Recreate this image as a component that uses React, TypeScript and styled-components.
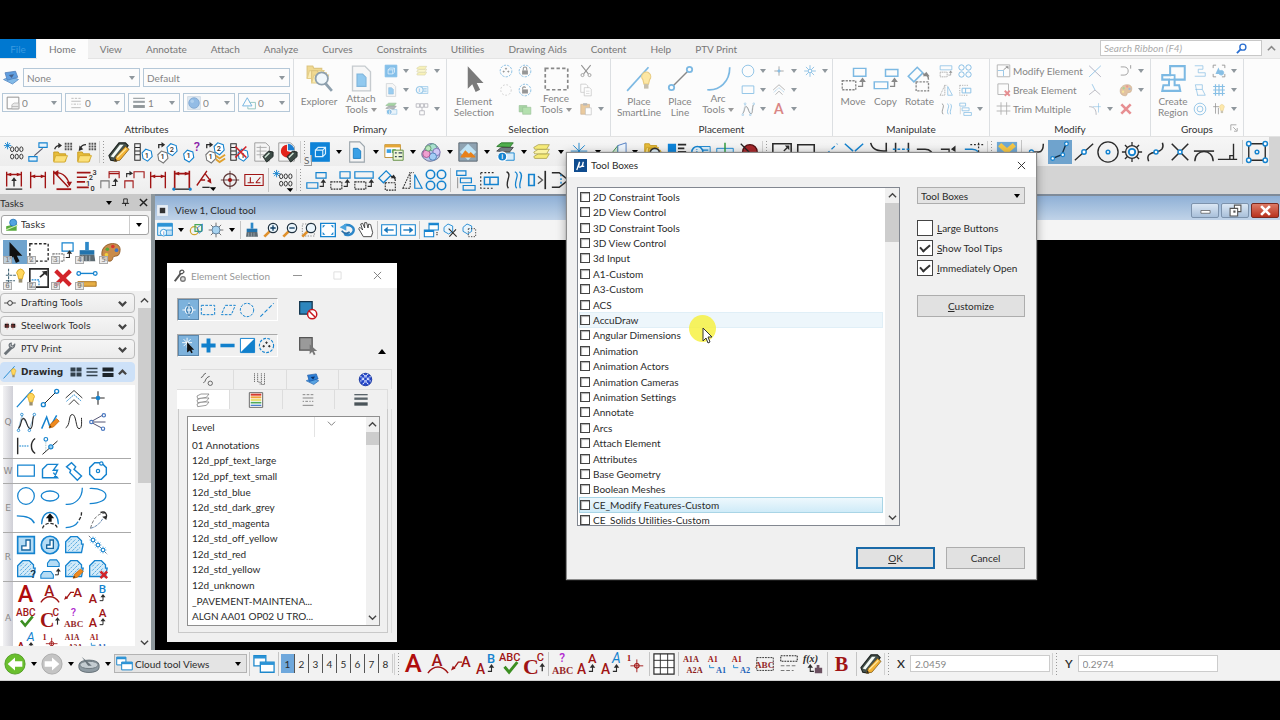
import React, { ReactNode } from "react";
import styled, { createGlobalStyle, css } from "styled-components";

const UI = 'Lato, "Open Sans", sans-serif';
const TASK = '"DejaVu Sans", Verdana, sans-serif';

const BLUE = "#1583cf";
const RED = "#a01414";
const INK = "#2b2b2b";
const GREY = "#8a8a8a";

const Global = createGlobalStyle`
  * { box-sizing: border-box; }
  body { margin: 0; background: #000; font: 10px/12px ${UI}; color: #2b2b2b; }
  body, button, input, select { font-variant-ligatures: none; }
  button, input, select { font: inherit; color: inherit; margin: 0; }
  button { padding: 0; border: 0; background: none; }
  ul { list-style: none; margin: 0; padding: 0; }
`;

/* ---------- drawing helpers ---------- */

const l = (d: string, c = BLUE, w = 1.4, dash?: string) => (
  <path d={d} fill="none" stroke={c} strokeWidth={w} strokeDasharray={dash} />
);
const f = (d: string, c: string, s = "none", w = 1) => (
  <path d={d} fill={c} stroke={s} strokeWidth={w} />
);
const o = (x: number, y: number, r: number, c = BLUE, fill = "none", w = 1.4, dash?: string) => (
  <circle cx={x} cy={y} r={r} fill={fill} stroke={c} strokeWidth={w} strokeDasharray={dash} />
);
const t = (x: number, y: number, size: number, s: string, c = RED, serif = false) => (
  <text
    x={x}
    y={y}
    fontSize={size}
    fill={c}
    fontWeight={serif ? 700 : 500}
    fontFamily={serif ? '"Liberation Serif", serif' : "Roboto, sans-serif"}
  >
    {s}
  </text>
);
const head = (x: number, y: number, c = INK) => f(`M${x} ${y - 3}l3 4h-6z`, c);
const hook = (x: number, y: number, c = INK) => (
  <>
    {l(`M${x} ${y}h4v-5`, c, 1.2)}
    {head(x + 4, y - 5, c)}
  </>
);
const dots = (x: number, y: number) => (
  <>
    {[0, 5, 10].map((d) => (
      <g key={d}>
        <ellipse cx={x + d} cy={y} rx="1.8" ry="2.6" fill="none" stroke={INK} strokeWidth="1" />
        <ellipse cx={x + d} cy={y + 8} rx="1.8" ry="2.6" fill="none" stroke={INK} strokeWidth="1" />
      </g>
    ))}
  </>
);
const miniDots = (x: number, y: number) => l(`M${x} ${y}h8M${x} ${y + 3}h8M${x} ${y + 6}h8`, "#555", 2, "2 1");
const tag = (x: number, y: number, s: string, c = BLUE) => (
  <>
    {f(`M${x} ${y}l4-4l6 2l1 6l-5 5l-5-3z`, "#fff", c, 1.2)}
    {t(x + 3, y + 5, 8, s, INK)}
  </>
);
const folder = (x: number, y: number) => (
  <>
    {f(`M${x} ${y}h5l1 2h7v8h-13z`, "#e7bd3b", "#c79a1c")}
    {f(`M${x + 2} ${y + 4}h13l-3 7h-12z`, "#fbe07a", "#d2a92c")}
  </>
);
const redX = (x: number, y: number, k = 6, w = 3) => l(`M${x - k} ${y - k}l${2 * k} ${2 * k}M${x + k} ${y - k}l${-2 * k} ${2 * k}`, "#d3242a", w);
const pen = (x: number, y: number) => (
  <>
    {f(`M${x} ${y + 10}l2-5l7-6l3 3l-7 7z`, "#f08a1d", "#c96a0c")}
    {f(`M${x} ${y + 10}l1-3l2 2z`, "#5b3a12")}
  </>
);
const tagPen = (
  <>
    {f("M1 16L12 2l7 0 3 3-5 8-8 9-6-1z", "#46524c", "#1c2220", 1.2)}
    {f("M3 17L13 4l4 0-11 14z", "#f4faf6")}
    {f("M7 22l2-5L19 6l4 3-10 12z", "#f3b234", "#7a5512", 0.8)}
    {l("M10 18L20 8", "#ffe9a3", 1.4)}
    {f("M7 22l1-3 2 2z", "#222")}
  </>
);
const miniTag = (
  <>
    {f("M12 17l6-6 5 1v5l-7 6z", "#3b4a45", "#1d2422")}
    {l("M14 18l5-5", "#cfe3d6", 1.6)}
  </>
);
const palette = (
  <>
    {f("M2 14C2 6 9 2 16 3c6 1 7 6 5 11-1 3-4 2-6 3s0 4-4 5C6 22 2 19 2 14z", "#c98b4a", "#8f5b26")}
    {o(8, 9, 2, "none", "#58a63a")}
    {o(14, 6, 2, "none", "#d9362b")}
    {o(7, 15, 2, "none", "#f1cf3b")}
    {o(18, 10, 2, "none", "#3d74c8")}
  </>
);
const bulb = (x: number, y: number) => (
  <>
    {f(`M${x} ${y}a4 4 0 1 1 6 0l-1 4h-4z`, "#ffd65c", "#d8a520")}
    {f(`M${x + 1} ${y + 4}h4v4h-4z`, "#9a8f6f")}
  </>
);
const hatch = (d: string) => (
  <>
    {f(d, "#d4ebf9", BLUE, 1.6)}
    {l("M5 9l4-4M5 14l9-9M5 19l13-13M10 19l8-8M15 19l4-4", "#4ba3dc", 1.1, "3 1")}
  </>
);
const block = "M2 21V8l6-6h8l5 5v4h2l-2 10z";
const layers = (a: string, b: string) => (
  <>
    {[14, 9, 4].map((y, i) => (
      <g key={y}>{f(`M3 ${y + 3}l5-3h12l-3 5h-13z`, i === 1 ? b : a, "#a39a45", 0.8)}</g>
    ))}
  </>
);
const sun = (x: number, y: number, r: number, c = BLUE, w = 1) =>
  l(`M${x} ${y - r}v${2 * r}M${x - r} ${y}h${2 * r}M${x - r * 0.7} ${y - r * 0.7}l${r * 1.4} ${r * 1.4}M${x + r * 0.7} ${y - r * 0.7}l${-r * 1.4} ${r * 1.4}`, c, w);
const magnifier = (sign: string) => (
  <>
    {l("M2 22l8-8", "#e0912c", 4)}
    {o(15, 9, 7, "#20313f", "#eaf5fc", 1.8)}
    {l(sign, "#0f3c63", 2)}
  </>
);
const lock = (open: boolean) => (
  <>
    {o(12, 12, 10, BLUE, "none", 1.6, "4 2")}
    {f("M7 11h10v7h-10z", "#333")}
    {l(open ? "M8 11V8a3 3 0 0 1 5 0" : "M9 11V8a3 3 0 0 1 6 0v3", "#333", 1.8)}
  </>
);
const red = (d: string, w = 1.5) => l(d, RED, w);
const brush = (
  <>
    {f("M10 1h4v9h-4z", "#2d88c8")}
    {f("M4 10h16v5h-16z", "#2273ad")}
    {f("M4 15h16l1 7h-18z", "#5d6a72")}
    {l("M7 16v6M11 16v6M15 16v6", "#aab6bd", 1)}
  </>
);
const windowPair = (
  <>
    {f("M1 3h13v11h-13z", "#fff", "#1d88cc", 1.4)}
    {f("M1 3h13v3h-13z", "#2b93d6")}
    {f("M8 10h15v11h-15z", "#fff", "#1d88cc", 1.4)}
    {f("M8 10h15v3h-15z", "#2b93d6")}
  </>
);
const lineStyles = l("M4 4h4m2 0h4m2 0h4M4 9h16M4 14h2m2 0h4m2 0h2m2 0h2M4 20h16", "#777", 1.3);
const weights = (
  <>
    {l("M2 4h20", "#5a646a", 2)}
    {l("M2 10h20", "#5a646a", 3.5)}
    {l("M2 18h20", "#4a5459", 5)}
  </>
);

const icons: Record<string, ReactNode> = {
  keyin: <>{sun(5, 5, 4)}{dots(10, 9)}</>,
  chain: <>{f("M13 2h9v5h-9zM2 17h9v5h-9z", "#e8f3fb", BLUE, 1.2)}{l("M8 16l9-8", "#556", 1.2)}</>,
  openDots: <>{folder(3, 12)}{miniDots(15, 3)}{l("M4 9c1-3 2-4 5-4", INK, 1.4)}{f("M12 5l-4-3v6z", INK)}</>,
  saveDots: <>{folder(3, 12)}{miniDots(15, 3)}{l("M6 8c1-3 3-4 6-4", INK, 1.4)}{f("M4 11l1-6 4 4z", INK)}</>,
  tagPen,
  tagCol: <>{l("M3 3h6v18h-6zM3 7h6M3 11h6M3 15h6", INK, 1.1)}{tag(11, 13, "1")}</>,
  tagCopy: <>{tag(2, 15, "1", "#777")}{tag(12, 7, "2")}{l("M3 8V4h4", INK)}{f("M10 4l-4-3v6z", INK)}</>,
  tagHelp: <>{tag(4, 14, "1")}{t(15, 11, 14, "?", "#8b1fa9")}</>,
  tagDown: <>{tag(2, 15, "1", "#777")}{tag(11, 6, "2")}{l("M13 16l4 3 6-4M13 20l4 3 6-4", "#e0a02b", 2)}{l("M3 8V4h4", INK)}{f("M10 4l-4-3v6z", INK)}</>,
  tagDel: <>{l("M3 3h6v18h-6zM3 7h6M3 11h6M3 15h6", INK, 1.1)}{tag(11, 13, "1")}{redX(14, 12, 6, 1.8)}</>,
  pageTag: <>{f("M3 2h12l4 4v16h-16z", "#f5f5f5", "#999")}{l("M5 7h11M5 11h11M5 15h8M9 5v14", "#aaa", 1)}{miniTag}</>,
  pieTag: <>{f("M3 2h13l4 4v16h-17z", "#f5f5f5", "#999")}{f("M12 11V4a7 7 0 1 0 7 9z", "#e2231a")}{f("M13 10V3a7 7 0 0 1 7 7z", "#1d7fd1")}{miniTag}</>,
  cube: <>{f("M2 2h20v20h-20z", "#0e83d8", "#0e83d8", 1.5)}{l("M7 10h8v7h-8zM7 10l3-3h8v7l-3 3M15 10l3-3", "#d8efff", 1.3)}</>,
  page: <>{f("M4 1h11l5 5v17h-16z", "#f4f4f4", "#9aa4ab", 1.2)}{f("M8 8h5l3 3v8h-8z", "#3aa0e6", "#1d7ec2")}</>,
  browser: <>{f("M2 4h17v14h-17z", "#fff", "#b98b2f")}{f("M2 4h17v3h-17z", "#e5a637")}{f("M4 9h5v4h-5z", "#3aa0e6")}{f("M10 9h4v4h-4z", "#47ad52")}{f("M11 10h11v11h-11z", "#eef6d8", "#5b8a3b")}{l("M13 13h2m2 0h4M13 17h2m2 0h4", "#345", 1.3)}</>,
  cluster: <>{f("M2 14c0-3 3-4 4-7s5-5 8-4 6 3 7 7 1 8-3 10-8 3-11 1-5-3-5-7z", "#b9c6e8", "#5a648a")}{o(14, 7, 4, "#5f9a8c", "#a9e0cf", 1)}{o(18, 12, 4, "#7c6fb0", "#cfc8f5", 1)}{o(14, 17, 4, "#4d7fb8", "#a3cdf5", 1)}{o(7, 14, 4, "#a8508e", "#ef9fd0", 1)}{o(9, 8, 3, "#5f9a6c", "#bce8bd", 1)}</>,
  picture: <>{f("M2 2h20v20h-20z", "#8fa3b2", "#59656e")}{f("M12 3l9 9-9 9-9-9z", "#bfe3f5")}{f("M4 17l5-7 4 4 2-2 5 5v1h-16z", "#e8811a")}</>,
  levelInfo: <>{f("M3 6l5-4h13l-4 5z", "#4fae4c", "#2b7a2c")}{f("M3 11l5-4h13l-4 5z", "#6f7a80", "#444")}{f("M3 16l5-4h10l-4 5z", "#e0862a")}{f("M10 13h12v8h-12z", "#d6ecfa", BLUE)}{o(9, 17, 5, "#fff", "#1583cf")}{t(8, 20, 8, "i", "#fff")}</>,
  levels: layers("#f5ea78", "#fbf3a6"),
  star: sun(12, 11, 9),
  mirrorGreen: <>{f("M2 20L14 5v12z", "#cfe9d0", "#3c8a4b")}{f("M14 5l9-3v14l-9 1z", "#eef6fd", "#4a78c0")}</>,
  folderFind: <>{folder(3, 3)}{folder(7, 8)}{o(14, 13, 5, "#333", "#dff0fa", 1.8)}</>,
  blueList: <>{f("M2 3h9v12h-9z", "#0e83d8")}{l("M13 4h9M13 8h7M13 12h9M3 19h18", INK, 2)}</>,
  info: <>{f("M10 6h12v12h-12z", "#d9eefb", BLUE)}{l("M14 10h6M14 14h6", BLUE)}{o(8, 12, 6, BLUE, "#e6f4fc", 1.6)}{t(6, 16, 10, "i", BLUE)}</>,
  plusBox: <>{f("M3 8h18v12h-18z", "#d9eefb", BLUE)}{l("M12 2v16", "#2e9a3c", 1.6)}</>,
  ball: <>{o(13, 12, 8, "#541012", "#a8282c")}{l("M3 3l18 18", "#222", 1.4)}</>,
  resize: <>{l("M2 3h20v18h-20z", INK, 1.7)}{l("M14 11l5-5", INK, 1.5)}{f("M20 5v5l-5-5z", INK)}</>,
  rect: l("M3 4h18v16h-18z", INK, 1.7),
  dashDiag: l("M2 20L20 3", BLUE, 1.4, "5 3"),
  cross: <>{l("M2 3l9 8M13 11l9-8", BLUE, 1.6)}{l("M4 20l7-8M20 20l-7-8", BLUE, 1.2, "3 2")}</>,
  curveIn: l("M4 2c2 8 8 9 18 9M21 2v9", INK, 1.7),
  trimPair: <>{l("M5 2v20M19 2v20", INK, 1.7)}{l("M2 9h20", BLUE, 1.5, "3 2")}</>,
  bend: l("M2 9h9c6 0 9 5 10 10", INK, 1.7),
  stepArrow: <>{l("M2 9h9v9", INK, 1.5)}{f("M13 9l5-4v7z", INK)}</>,
  tangDash: <>{l("M2 9h8c6 0 8 4 11 10", BLUE, 1.6)}{l("M8 4h14M17 2v10", INK, 1.3, "2 2")}</>,
  yellowX: <>{f("M1 1h22v22h-22z", "#6fa8d4")}{l("M4 4l8 7 8-7M12 11v9", "#f5c746", 5)}</>,
  snapElbow: <>{l("M9 12h6c4 0 5-3 5-9", INK, 1.6)}{o(7, 12, 2.2, BLUE, "#fff")}</>,
  snapNear: <>{l("M4 19l10-4 5-13", "#14324a", 1.5)}{o(4, 19, 2, BLUE, "#fff")}{o(15, 15, 2, BLUE, "#fff")}{o(19, 3, 2, BLUE, "#fff")}</>,
  snapMid: <>{l("M2 21L22 3", INK, 1.5)}{o(12, 12, 2.4, BLUE, "#fff", 1.6)}</>,
  snapCenter: <>{o(12, 12, 11, INK, "none", 1.5)}{o(12, 12, 2, BLUE, "#fff", 1.6)}</>,
  snapOrigin: <>{sun(12, 12, 11, INK, 1.4)}{o(12, 12, 7, INK, "#f2f2f2", 1.4)}{o(12, 12, 3.5, BLUE, "#fff", 2)}</>,
  snapBisect: <>{l("M4 22c-3-7 2-9 8-10s9-4 7-10", INK, 1.6)}{o(12, 12, 2.2, BLUE, "#fff", 1.6)}</>,
  snapInter: <>{l("M3 3l18 18M21 3L3 21", INK, 1.7)}{o(12, 12, 2.2, BLUE, "#fff", 1.6)}</>,
  snapTang: <>{l("M1 11h22", INK, 1.7)}{l("M2 22c0-14 20-14 20 0", INK, 1.5)}</>,
  snapPerp: <>{l("M1 20h21M18 3v17M14 20v-4h4", INK, 1.5)}</>,
  snapMulti: <>{l("M3 3h18v18h-18z", INK, 1.5)}{[3, 21].map((x) => [3, 21].map((y) => <g key={`${x}-${y}`}>{o(x, y, 2.4, BLUE, "#fff", 1.6)}</g>))}{o(12, 12, 2, BLUE, "#fff", 1.6)}</>,

  dimUp: <>{red("M4 3v16M20 3v16M4 6h16")}{f("M4 6l5-2v4zM20 6l-5-2v4z", RED)}{l("M3 22h18M12 19v-7", INK, 1.5)}{head(12, 12)}</>,
  dimH: <>{red("M4 3v18M20 3v18M4 8h16")}{f("M4 8l5-2v4zM20 8l-5-2v4z", RED)}</>,
  dimAngle: <>{red("M3 2v15M3 3l16 17M4 4c9-1 15 6 16 14")}{l("M6 22h16", RED, 2)}{f("M3 4l5-3v6zM20 19l-3-5h6z", RED)}</>,
  dimOrd: <>{red("M2 4h15M2 9h11M2 14h9M2 20h13", 1.8)}{t(19, 7, 8, "3", INK)}{t(15, 12, 8, "2", INK)}{t(12, 18, 8, "1", INK)}{t(17, 24, 8, "0", INK)}</>,
  dimCopy: <>{red("M11 10V3h11v7M11 5h11", 1.2)}{l("M2 21v-8h9v8", "#777", 1.2)}{hook(14, 18)}</>,
  dimCopy2: <>{red("M12 10V3h11v7M2 21v-8h9v8", 1.2)}{l("M4 9V5h4", INK, 1.2)}{f("M11 5l-4-3v5z", INK)}</>,
  dimBox: <>{red("M4 2v19M20 2v19M4 5h16", 1.8)}{f("M4 5l5-2v4zM20 5l-5-2v4z", RED)}{l("M3 22h18", INK, 1.5)}{o(3, 22, 1, BLUE, BLUE)}{o(21, 22, 1, BLUE, BLUE)}</>,
  dimSlope: <>{red("M2 18L13 2M6 12h5M11 5l6 8")}{f("M18 16l-5-3 4-3z", RED)}{l("M8 20h8", INK)}{f("M16 20h7l-3 4z", "#000")}</>,
  target: <>{o(12, 12, 7, "#5b3434", "none", 1.4)}{l("M12 2v20M2 12h20", "#5b3434", 1)}{o(12, 12, 1.5, RED, RED)}</>,
  perpBox: <>{red("M2 6h20v12h-20zM5 15h7M8 9v6M14 15l5-6M14 15h5", 1.2)}</>,
  keyinMenu: <>{sun(5, 5, 4)}{dots(10, 8)}{f("M16 21h7l-3 4z", "#000")}</>,
  copyUp: <>{l("M12 4h11v6h-11zM2 15h12v6h-12z", BLUE, 1.3)}{hook(16, 19)}</>,
  moveUp: <>{l("M12 3h11v7h-11z", BLUE, 1.3)}{l("M2 14h12v8h-12z", INK, 1.2, "2 1")}{hook(16, 19)}</>,
  scaleUp: <>{l("M2 3h20v7h-20z", BLUE, 1.3)}{l("M2 14h12v8h-12z", INK, 1.2, "2 1")}{hook(16, 19)}</>,
  rotate: <>{l("M2 10l8-8 5 5-8 8z", BLUE, 1.4)}{l("M9 15h11v8h-11z", INK, 1.2, "2 1")}{l("M20 13c0-4-2-5-5-5", INK, 1.3)}{head(18, 9)}</>,
  mirror: <>{l("M2 21L10 4v17z", INK, 1.1, "2 1")}{l("M15 6l8 15h-8z", BLUE, 1.3)}{l("M9 4h6", INK, 1, "1 1")}</>,
  array: <>{[6, 18].map((x) => [6, 18].map((y) => <g key={`${x}-${y}`}>{o(x, y, 4.6, BLUE, "none", 1.7)}</g>))}</>,
  align: <>{l("M3 2h10v5h-10zM7 10h12v5h-12zM10 18h13v5h-13z", BLUE, 1.3)}{l("M4 9v12", "#888", 1)}</>,
  stretch: <>{l("M7 9h15v8h-15zM13 9v8", BLUE, 1.6)}{l("M3 4h14M3 4v17h14", INK, 1.2, "2 2")}</>,
  moveParallel: <>{l("M5 3c7 3-3 12 2 18", INK, 1.5)}{l("M14 3c7 3-3 12 2 18M19 3c6 4-2 12 1 18", BLUE, 1.4)}</>,
  alignEdge: <>{l("M3 6h6v12h-6z", BLUE, 1.8)}{l("M13 8l5 4-5 4", "#555", 1.4)}{l("M21 2v20", INK, 1.8)}</>,
  roundEdge: <>{l("M2 4h8l10 8-10 8h-8", INK, 1.7)}{l("M12 6v12", BLUE, 1.5, "2 2")}</>,

  explorer: <>{folder(1, 1)}{folder(5, 5)}{o(14, 12, 5.5, "#35566f", "#e8f4fb", 1.6)}{l("M17 16l6 7", "#35566f", 2.4)}</>,
  cursor: f("M6 1v20l4-4 3 7 4-2-3-6h6z", "#111"),
  fence: l("M2 3h20v19h-20z", INK, 1.5, "3 2"),
  dashDots: <>{o(12, 12, 10, BLUE, "none", 1.6, "4 2")}{o(8, 13, 1, INK, INK)}{o(16, 13, 1, INK, INK)}{o(12, 8, 1, INK, INK)}</>,
  dashCircle: o(12, 12, 9, "#888", "none", 1.2, "3 3"),
  lockClosed: lock(false),
  lockOpen: lock(true),
  greenFolders: <>{f("M2 6h13v11h-13z", "#55b04e", "#2f7d2c")}{f("M8 9h14v12h-14z", "#6fc564", "#2f7d2c")}</>,
  cut: <>{l("M4 2l12 15M20 2L8 17", INK, 1.8)}{o(6, 19, 2.6, INK)}{o(18, 19, 2.6, INK)}</>,
  copy: <>{f("M3 2h9l3 3v11h-12z", "#fff", "#777")}{f("M9 8h9l3 3v11h-12z", "#fff", "#777")}{l("M12 14h6M12 18h6", "#999", 1)}</>,
  paste: <>{f("M3 4h15v17h-15z", "#d99a43", "#8f5b20")}{f("M7 2h7v4h-7z", "#777")}{f("M11 10h10v12h-10z", "#fff", "#777")}</>,
  grid4: <>{l("M2 3h6v6h-6zM9 3h6v6h-6zM16 3h6v6h-6zM8 15h8v7h-8zM12 9v6", "#556", 1.2)}</>,
  smartline: <>{l("M1 23L20 2", BLUE, 1.5)}{bulb(15, 13)}</>,
  line: <>{l("M4 20L20 4", INK, 1.2)}{o(4, 20, 2.4, BLUE, "#fff", 1.6)}{o(20, 4, 2.4, BLUE, "#fff", 1.6)}</>,
  arc: l("M2 22C13 23 22 15 22 2", BLUE, 1.5),
  circle: o(12, 12, 10, BLUE, "none", 1.5),
  box: l("M2 5h20v13h-20z", BLUE, 1.5),
  point: <>{l("M12 4v16M4 12h16", INK, 1.3)}{o(12, 12, 2, BLUE, BLUE)}</>,
  burst: <>{sun(12, 12, 10, BLUE, 1.5)}{o(12, 12, 3, BLUE, "#fff")}</>,
  spline: <>{l("M3 20L7 4l9 16 6-16", "#8fb8d4", 1)}{l("M3 20C8 13 5 8 9 8s4 12 8 12 2-10 4-15", INK, 1.4)}{o(7, 3, 1.5, BLUE, "#fff", 1)}{o(22, 3, 1.5, BLUE, "#fff", 1)}{o(3, 22, 1.5, BLUE, "#fff", 1)}{o(16, 22, 1.5, BLUE, "#fff", 1)}</>,
  peaks: <>{l("M2 12l10-9 10 9M6 20l6-6 6 6", INK, 1.1)}{l("M3 16l9-8 9 8", BLUE, 1.1, "2 1")}</>,
  letterA: t(3, 21, 26, "A", "#b91111"),
  createRegion: <>{l("M9 1h13v12h-9v5h4l1 5H2l1-5h5v-5H2V9h7z", BLUE, 1.8)}{l("M9 9h4v4M8 13h5", BLUE, 1.6)}</>,
  regionA: l("M3 3h14v6h-8v6h12v6h-18", BLUE, 1.2),
  regionB: l("M4 3h12v8l5 10h-14M4 3l4 18M4 11h12", BLUE, 1.2),
  ring: <>{o(12, 12, 10)}{o(12, 12, 5)}</>,
  select3: <>{l("M2 7V2h5M17 2h5v5M22 17v5h-5M7 22H2v-5", INK, 1.5)}{f("M6 17l5-11 5 11z", "#1583cf")}{o(16, 15, 4, BLUE, "#1583cf")}</>,
  hash: l("M6 2v20M12 2v20M18 2v20M2 6h20M2 12h20M2 18h20", BLUE, 2),
  hashBulb: <>{l("M6 2v18M2 8h10M11 10v11", INK, 1.3)}{bulb(14, 11)}</>,
  modify: <>{l("M2 3h20v19h-20z", "#666", 1.4)}{l("M3 12h9v9", BLUE, 1.3)}{l("M12 11l6-5", INK, 1.5)}{f("M20 5v5l-5-5z", INK)}</>,
  breakEl: <>{l("M3 3h17v17h-17z", "#666", 1.4)}{redX(18, 18, 4, 3)}</>,
  trim: l("M8 2v20M17 2v20M1 8h22M1 16h22", "#666", 1.4),
  xLines: <>{l("M2 3l20 19", "#557", 1.4)}{l("M22 3L2 22", BLUE, 1.4)}</>,
  branch: <>{l("M2 20l10-8 9 8", "#667", 1.4)}{l("M7 2l5 10", BLUE, 1.3)}</>,
  tee: <>{l("M2 8c8 0 12 4 12 14", "#667", 1.4)}{l("M18 2v16M8 8h14", BLUE, 1)}</>,
  dee: <>{l("M3 5h6c9 0 9 14 0 14h-6", INK, 1.4)}{l("M20 2v6", INK, 1.5)}</>,
  palette,
  redX: redX(12, 12, 8, 4.5),
  levelBlue: <>{f("M2 14l10-4 10 4-8 6z", "#5aa4e2", "#1b5fae")}{f("M4 5l14-2 3 8-14 4z", "#2d7fd6", "#1653a0")}{f("M9 8l7-1-3 5z", "#0b2f66")}</>,
  swatch: <>{f("M2 2h20v20h-20z", "#fff", "#444", 1.6)}{f("M10 15l4-3h8v10h-12z", "#ddd", "#666")}{l("M10 18h11", "#666", 1)}</>,
  globe: <>{f("M1 1h22v22h-22z", "#cfe0ee", "#9db4c6")}{o(12, 12, 9, "#2a6ab0", "#4e93d6")}{o(9, 9, 3, "none", "#7fb4e6")}</>,
  triSquare: <>{l("M1 17L9 3l8 14z", BLUE, 1.6)}{l("M13 11h10v11h-13v-4", "#4fa39a", 1.6)}</>,
  lineStyles,
  weights,

  elMove: <>{l("M11 2h12v9h-12z", BLUE, 1.3)}{l("M1 14h12v8h-12z", "#777", 1.2, "2 1")}{hook(15, 18)}</>,
  brush,
  accuBulb: <>{l("M5 2v20M2 9h12M2 15h10", "#467", 1.2, "3 1")}{bulb(15, 9)}</>,
  modBox: <>{l("M2 2h20v20h-20z", INK, 1.8)}{l("M13 11l6-5", INK, 1.8)}{f("M21 4v6l-6-5z", INK)}{l("M4 14h8v7", BLUE, 1.2, "2 1")}</>,
  measure: <>{l("M4 7h16", BLUE, 1.5)}{o(3, 7, 2, BLUE, "#fff")}{o(21, 7, 2, BLUE, "#fff")}{f("M2 16h20v5h-20z", "#e6ae45", "#a9701a")}</>,
  tasks: <>{f("M2 14l18-4v12h-18z", "#58ab3d")}{o(14, 8, 6, "#1f6fb5", "#52a4e0")}{l("M2 20L22 12", "#d3f0b5", 2)}</>,
  plane: <>{l("M2 12h20", INK, 1.4)}{o(12, 12, 4, INK, "#f3f3f3", 1.6)}</>,
  steel: <>{f("M3 8h7v7h-7zM14 8h7v7h-7z", "#111")}{l("M1 12h22M7 6v12M17 6v12", "#e0524e", 0.8)}</>,
  wrench: <>{l("M3 21L15 9", "#6b7278", 5)}{l("M21 3l-4 4-3-1 0-4c-3 0-5 4-2 7s8 1 8-4", "#6b7278", 2.2)}</>,
  gridView: f("M1 3h10v8h-10zM13 3h10v8h-10zM1 13h10v8h-10zM13 13h10v8h-10z", "#33414c"),
  listView: l("M1 5h22M1 12h22M1 19h22", "#33414c", 2.6),
  panelView: f("M1 3h22v8h-22zM1 14h22v8h-22z", "#1d252b"),

  sketch: <>{l("M2 20L8 6l4 12 8-14", BLUE, 1.8)}{pen(11, 9)}</>,
  wave: l("M2 19C8 16 5 3 10 3s4 17 8 17 3-8 3-13", INK, 1.2),
  rays: <>{l("M3 12L19 3M3 12h18M3 12l15 8", "#446", 1.1)}{o(4, 12, 2, "#4a78c0", "#fff")}{o(19, 4, 2, "#4a78c0", "#fff")}{o(18, 20, 2, "#4a78c0", "#fff")}</>,
  construct: <>{l("M2 2v20M23 3c-6 4-6 14 0 18", INK, 1.7)}{l("M4 12h12", BLUE, 1.4, "2 1")}</>,
  perpLine: <>{l("M3 22L21 6", INK, 1.2)}{o(7, 4, 2.2, BLUE, "#fff")}{o(13, 13, 2.5, BLUE, "#9ad0f2")}{l("M7 7v12", "#8aa", 1, "1 1")}</>,
  shape: l("M9 4h12l-5 7h5l-4 9M9 4L3 10v10h18l-5-6", BLUE, 1.7),
  orthoShape: l("M3 7l6-5 5 5-2 3 9 8-5 5-9-9 1-3z", BLUE, 1.7),
  polygon: <>{l("M8 2h8l6 6v8l-6 6h-8l-6-6v-8z", BLUE, 1.7)}{o(12, 12, 2, BLUE, "#fff")}{o(16, 3, 2, BLUE, "#fff")}</>,
  ellipse: <ellipse cx="12" cy="12" rx="10.5" ry="6" fill="none" stroke={BLUE} strokeWidth="1.6" />,
  halfEllipse: l("M2 3c26-1 26 18 0 18", BLUE, 1.5),
  quarter: l("M1 7c12 0 19 3 21 9", BLUE, 1.6),
  arcUp: <>{l("M2 17C2-2 22-2 22 17", BLUE, 1.5)}{l("M3 22c2-8 16-8 18 0", INK, 1.5, "4 2")}{f("M12 4l5 6h-3v4h-4v-4h-3z", "#111")}</>,
  arcExt: <>{l("M2 21c8 0 12-2 15-7", BLUE, 1.5)}{l("M18 12c3-4 3-7 3-10", INK, 1.6, "4 2")}</>,
  arcMod: <>{l("M3 22C6 11 11 4 20 4", "#777", 1.2, "4 2")}{l("M3 22c8-2 12-7 15-12", "#5b7fa8", 1.1, "4 1")}{l("M15 3c6-2 8 2 7 6", INK, 1.6)}{f("M17 8l6-1-1 5z", INK)}</>,
  hatchBox: <>{f("M2 2h20v20h-20z", "#b5dcf5", BLUE, 2)}{f("M12 6h5v12h-10v-5h5z", "#fff", "#17659e", 1.6)}</>,
  hatchCircle: <>{o(12, 12, 10.5, BLUE, "#b5dcf5", 2)}{f("M12 6h4v10h-8v-4h4z", "#fff", "#17659e", 1.6)}</>,
  hatchBlock: hatch(block),
  gears: <>{l("M1 1l22 22", "#556", 1, "2 1")}{sun(6, 6, 4)}{o(6, 6, 2, BLUE, "#fff", 1)}{sun(12, 12, 4)}{o(12, 12, 2, BLUE, "#fff", 1)}{sun(18, 18, 4)}{o(18, 18, 2, BLUE, "#fff", 1)}</>,
  hatchHelp: <>{hatch(block)}{t(17, 23, 14, "?", "#14324a")}</>,
  hatchCopy: <>{f("M9 9v-4l3-4h8l3 4v4zM1 23v-4l3-4h9l3 4v4z", "#b5dcf5", BLUE, 1.3)}{hook(18, 19)}</>,
  hatchEdit: <>{hatch(block)}{pen(11, 13)}</>,
  hatchDel: <>{hatch(block)}{redX(19, 19, 4, 3)}</>,

  textA: t(2, 21, 28, "A", "#b00d0d"),
  textArc: <>{t(5, 14, 18, "A")}{red("M1 22c6-9 16-9 22 0", 1.6)}</>,
  textNote: <>{t(11, 15, 16, "A")}{red("M3 17l5-7h4", 1.5)}{f("M0 19l2-5 3 3z", RED)}</>,
  textCopyB: <>{t(1, 23, 15, "A")}{t(13, 11, 14, "B", BLUE)}{hook(14, 20)}</>,
  spell: <>{t(0, 9, 12, "ABC")}{l("M6 15l5 6 9-11", "#3c8f22", 3.2)}</>,
  textCase: <>{t(0, 23, 24, "C", RED, true)}{t(15, 9, 12, "C")}{l("M21 20v-6", INK, 1.4)}{head(21, 14)}</>,
  textHelp: <>{t(8, 10, 13, "?", "#b02bd0")}{t(0, 23, 11, "ABC", "#962a2a", true)}</>,
  textMatch: <>{t(1, 23, 15, "A")}{t(13, 11, 14, "A")}{hook(14, 20)}</>,
  textItalic: <>{t(1, 23, 15, "A")}<text x="13" y="11" fontSize="15" fontStyle="italic" fill={BLUE} fontFamily="Roboto, sans-serif">A</text>{hook(14, 20)}</>,
  textPoint: <>{t(3, 9, 10, "1", RED, true)}{o(14, 14, 2.5, RED, "none", 1.1)}{red("M14 7v14M7 14h14", 1)}</>,
  table: <>{f("M1 1h22v22h-22z", "#fff", INK, 1.3)}{l("M8 1v22M16 1v22M1 8h22M1 16h22", INK, 1)}</>,
  a1a: <>{t(1, 10, 9, "A1A", "#8c1c1c", true)}{t(5, 22, 9, "A2A", "#8c1c1c", true)}</>,
  a1a1: <>{t(2, 10, 9, "A1", RED, true)}{t(11, 22, 9, "A1", "#1c62b8", true)}{l("M4 13v3h5", BLUE, 1)}</>,
  a1a2: <>{t(2, 10, 9, "A1", RED, true)}{t(11, 22, 9, "A2", "#1c62b8", true)}{l("M4 13v3h5", BLUE, 1)}</>,
  abcField: <>{l("M3 5h18v14h-18z", INK, 1, "2 1")}{t(1, 16, 10, "ABC", "#962a2a", true)}</>,
  fields: <>{l("M3 3h18v6h-18z", INK, 1.2, "2 1")}{l("M3 14h18M3 19h14", "#777", 1.1, "4 2")}</>,
  fx: <><text x="1" y="10" fontSize="11" fontStyle="italic" fontWeight="700" fill={INK} fontFamily="Liberation Serif, serif">f(x)</text>{l("M9 15v5h4", INK, 1.2)}{head(9, 15)}{f("M16 13h3v3h3v6h-8v-6h2z", "#6b5060")}</>,
  boldB: t(4, 20, 22, "B", RED, true),

  back: <>{o(12, 12, 11, "#4f9d20", "#6abf2e", 1)}{f("M4 12l8-7v4h8v6h-8v4z", "#fff")}</>,
  forward: <>{o(12, 12, 11, "#a9a9a9", "#c4c4c4", 1)}{f("M20 12l-8-7v4h-8v6h8v4z", "#fff")}</>,
  compass: <>{f("M1 13c0-7 22-7 22 0v3c0 7-22 7-22 0z", "#8f9ba3", "#626d74")}<ellipse cx="12" cy="13" rx="10" ry="4" fill="#c4ccd1" stroke="#6c777e" />{f("M4 4l9 8 2 2-4 0z", "#68737a")}</>,
  windowPair,

  viewAttr: <>{f("M1 2h22v18h-22z", "#e6f4fc", "#1d88cc", 1.4)}{f("M1 2h22v5h-22z", "#2b93d6")}{o(10, 16, 5, "#2b93d6", "#fff")}{f("M14 12h9v8h-9z", "#bfe0f5", BLUE)}{t(9, 19, 8, "i", BLUE)}</>,
  shapesColor: <>{o(8, 13, 6, "#cfa52e", "none", 1.8)}{l("M9 4h10v10h-10z", "#48a85a", 1.8)}{l("M12 9l8-6v10l-5 4z", "#2d7ed0", 1.3)}</>,
  lamp: <>{sun(12, 12, 11, "#555", 1.2)}{o(12, 12, 6, "#5f7f9c", "#a7d3f0")}</>,
  zoomIn: magnifier("M11 9h8M15 5v8"),
  zoomOut: magnifier("M11 9h8"),
  zoomWin: <>{l("M2 3h18v18h-18z", "#777", 1.2, "2 2")}{magnifier("")}</>,
  fit: <>{f("M1 2h22v20h-22z", "#fff", BLUE, 2)}{f("M4 5h4l-4 4zM20 5h-4l4 4zM4 19h4l-4-4zM20 19h-4l4-4z", BLUE)}</>,
  orbit: <>{l("M8 5c9-2 15 3 14 8s-9 9-14 5", "#2b86c9", 3.5)}{f("M1 8l10-6v11z", "#4aa3de")}{l("M4 13c4 5 8 5 12 2", "#2b6ea5", 2.4)}</>,
  hand: f("M8 22L1 10l2-2 4 4L4 3l3-1 3 7 0-8 3 0 2 8 1-6 3 1 3 12-2 6z", "#fff", "#333", 1.3),
  viewPrev: <>{f("M1 4h22v16h-22z", "#fff", BLUE, 1.6)}{l("M8 12h11", "#1677bd", 2)}{f("M4 12l6-5v10z", "#1677bd")}</>,
  viewNext: <>{f("M1 4h22v16h-22z", "#fff", BLUE, 1.6)}{l("M5 12h11", "#1677bd", 2)}{f("M20 12l-6-5v10z", "#1677bd")}</>,
  viewCopy: <>{f("M9 2h14v10h-14zM2 12h14v10h-14z", "#fff", BLUE, 1.6)}{f("M9 2h14v3h-14zM2 12h14v3h-14z", BLUE)}{l("M21 15v6", INK, 1.6, "2 1")}</>,
  clip: <>{f("M3 8l6-5 7 3v8l-6 4-7-4z", "#eaf5fc", BLUE, 1.3)}{l("M10 10l12 12M21 11L11 22", INK, 1.6)}</>,
  clipMask: <>{f("M3 8l6-5 7 3v8l-6 4-7-4z", "#eaf5fc", BLUE, 1.3)}{l("M11 10h11v12h-11z", INK, 1.2, "2 2")}</>,

  selIndividual: <>{o(12, 12, 6, "#fff", "none", 1.3)}{l("M12 1v22M2 12h20", "#fff", 1.3)}{l("M12 3l4 9-4 9-4-9z", "#1a5d94", 1)}</>,
  dashBox: l("M2 5h20v14h-20z", BLUE, 1.5, "4 2"),
  dashShape: l("M8 5h15l-6 14h-15z", BLUE, 1.5, "4 2"),
  dashRound: o(12, 12, 10, BLUE, "none", 1.5, "4 2"),
  dashLine: l("M2 22L22 2", BLUE, 1.6, "6 3"),
  selNew: <>{sun(10, 8, 7, "#fff", 1.3)}{f("M10 7v15l4-3 2 4 2-1-2-4h4z", "#111")}</>,
  plus: l("M12 2v20M2 12h20", "#1180cc", 5.5),
  minus: l("M2 12h20", "#1180cc", 5),
  invert: <>{f("M2 2h20v20h-20z", "#fff", BLUE, 1.4)}{f("M22 2v20h-20z", "#1180cc")}</>,
  disableHandles: <>{f("M2 2h15v15h-15z", "#2e86bd", "#12344d", 1.5)}{o(17, 17, 5.5, "#c8161d", "#fff", 1.8)}{l("M13 13l8 8", "#c8161d", 1.8)}</>,
  selectAll: <>{f("M2 2h15v15h-15z", "#9a9a9a", "#555", 1.5)}{f("M14 10v12l3-3 2 4 2-1-2-4h4z", "#777")}</>,
  curves: <>{l("M3 9C8 8 6 3 11 2M7 17c4 0 2-8 10-10", "#555", 1.5)}{o(18, 18, 3.5, "#555")}</>,
  ports: l("M4 2v14M9 2v14h4v4M15 2v18M20 2v18h-5", "#555", 1.3, "2 1"),
  ballBlue: <>{o(12, 12, 10, "#15329a", "#2244c8")}{l("M4 7l13 13M8 3l13 13M20 7L7 20M16 3L3 16", "#dfe8ff", 2, "2 1")}</>,
  levelsGrey: <>{[15, 9, 3].map((y) => <g key={y}>{f(`M3 ${y + 3}l6-3 12 0-4 5-13 2z`, "#fff", "#777", 1.1)}</g>)}</>,
  colors: <>{f("M2 1h20v22h-20z", "#fff", "#555", 1.3)}{l("M4 4h16", "#d63a2e", 3)}{l("M4 8h16", "#f0a33a", 3)}{l("M4 12h16", "#e5d95a", 2.5)}{l("M4 16h16", "#4fa95b", 2.5)}{l("M4 20h16", "#4b7fd0", 2)}</>,
  settings: <>{l("M3 21L13 8", "#555", 3.5)}{l("M12 8c-2-6 5-8 7-3l-3 3z", "#555", 2)}{o(17, 17, 4, "#777", "#ddd", 2.2)}</>,
  link: <>{f("M2 2h20v20h-20z", "#e8eef5")}{f("M7 7h10v10h-10z", "#333")}</>,
};

const Svg = styled.svg<{ $s: number }>`
  width: ${(p) => p.$s}px;
  height: ${(p) => p.$s}px;
  flex: none;
  display: block;
  overflow: visible;
`;
const Icon = ({ name, size = 22 }: { name: string; size?: number }) => (
  <Svg viewBox="0 0 24 24" $s={size} aria-hidden>
    {icons[name]}
  </Svg>
);

/* ---------- shared parts ---------- */

const Caret = styled.span<{ $c?: string; $w?: number }>`
  flex: none;
  width: 0;
  height: 0;
  border: 3px solid transparent;
  border-top: 4px solid ${(p) => p.$c ?? "#000"};
  border-bottom: 0;
  margin: 0 ${(p) => p.$w ?? 0}px;
  pointer-events: none;
`;
const Chevron = ({ dir, c = "#444", w = 2.5 }: { dir: "up" | "down"; c?: string; w?: number }) => (
  <Svg viewBox="0 0 10 10" $s={9} aria-hidden>
    {l(dir === "up" ? "M1 7l4-4 4 4" : "M1 3l4 4 4-4", c, w)}
  </Svg>
);
const Cross = ({ c = "#222", s = 9, w = 1 }: { c?: string; s?: number; w?: number }) => (
  <Svg viewBox="0 0 10 10" $s={s} aria-hidden>
    {l("M1 1l8 8M9 1l-8 8", c, w)}
  </Svg>
);

const Screen = styled.div`
  min-height: 100vh;
  padding: 39px 0;
  display: flex;
  flex-direction: column;
`;
const Shell = styled.main`
  position: relative;
  flex: 1;
  display: flex;
  flex-direction: column;
  background: #f0f0f0;
  overflow: hidden;
`;

/* ---------- ribbon ---------- */

const TabBar = styled.nav`
  display: flex;
  height: 20px;
  background: #f0f0f0;
  color: #777;
  border-bottom: 1px solid #e4e4e4;
`;
const FileTab = styled.button`
  width: 36px;
  margin-right: 1px;
  background: #0078d0;
  color: #3a9ae0;
`;
const Tab = styled.button<{ $on?: boolean }>`
  padding: 0 12px;
  margin-bottom: -1px;
  background: ${(p) => (p.$on ? "#fcfcfc" : "none")};
`;
const SearchBox = styled.label`
  margin: 1px 0 2px auto;
  width: 162px;
  display: flex;
  align-items: center;
  padding-right: 14px;
  background: #fff;
  border: 1px solid #c8c8c8;
  input {
    flex: 1;
    min-width: 0;
    padding: 0 3px;
    border: 0;
    background: none;
    font-style: italic;
    outline: 0;
  }
  input::placeholder { color: #aaa; }
`;
const Collapse = styled.button`
  width: 18px;
  display: grid;
  place-items: center;
`;
const RibbonBar = styled.section`
  display: flex;
  height: 78px;
  background: #fcfcfc;
  border-bottom: 1px solid #e2e2e2;
`;
const Group = styled.div<{ $w: number }>`
  width: ${(p) => p.$w}px;
  flex: none;
  display: flex;
  flex-direction: column;
  border-right: 1px solid #dcdfe2;
  color: #858585;
`;
const GroupBody = styled.div<{ $p?: number }>`
  display: flex;
  height: 64px;
  padding: 2px 0 0 ${(p) => p.$p ?? 4}px;
`;
const GroupName = styled.div`
  position: relative;
  text-align: center;
  color: #333;
  line-height: 14px;
  svg { position: absolute; right: 5px; top: 2px; }
`;
const Big = styled.button<{ $w: number; $menu?: boolean }>`
  width: ${(p) => p.$w}px;
  flex: none;
  display: flex;
  flex-direction: column;
  align-items: center;
  line-height: 11px;
  padding-top: 4px;
  gap: ${(p) => (p.$menu ? 1 : 4)}px;
  svg { opacity: 0.55; }
`;
const BigLine = styled.span`
  display: flex;
  align-items: center;
  justify-content: center;
  gap: 3px;
  height: 11px;
  white-space: nowrap;
`;
const MiniCol = styled.div<{ $w: number }>`
  display: flex;
  flex-direction: column;
  width: ${(p) => p.$w}px;
  flex: none;
`;
const Mini = styled.button`
  height: 19px;
  display: flex;
  align-items: center;
  white-space: nowrap;
  svg { opacity: 0.5; margin: 0 2px; }
`;
const AttrRows = styled.div`
  display: flex;
  flex-direction: column;
  gap: 6px;
  padding-top: 7px;
`;
const AttrRow = styled.div`
  display: flex;
  align-items: center;
  gap: 3px;
  > svg { opacity: 0.75; }
`;
const Field = styled.label<{ $w: number }>`
  width: ${(p) => p.$w}px;
  height: 19px;
  display: flex;
  align-items: center;
  border: 1px solid #b5c8d8;
  padding: 0 4px 0 2px;
  svg { opacity: 0.6; margin: 0 1px; }
  select {
    flex: 1;
    min-width: 0;
    appearance: none;
    border: 0;
    padding: 0 1px;
    background: none;
    outline: 0;
  }
`;

const FieldSelect = ({ w, value, icon, label }: { w: number; value: string; icon?: string; label: string }) => (
  <Field $w={w}>
    {icon && <Icon name={icon} size={14} />}
    <select aria-label={label} defaultValue={value}>
      <option>{value}</option>
    </select>
    <Caret $c="#8f979d" />
  </Field>
);
const BigButton = ({ w, icon, lines, menu }: { w: number; icon: string; lines: string[]; menu?: boolean }) => (
  <Big $w={w} $menu={menu} type="button">
    <Icon name={icon} size={27} />
    <span>
      {lines.map((s, i) => (
        <BigLine key={s}>
          {s}
          {menu && i === lines.length - 1 && <Caret $c="#9a9a9a" />}
        </BigLine>
      ))}
    </span>
  </Big>
);
/* An item name ending in ">" carries a drop-down arrow. */
const MiniColumn = ({ items, w }: { items: string[]; w: number }) => (
  <MiniCol $w={w}>
    {items.map((n, i) =>
      n ? (
        <Mini key={i} type="button" aria-label={n.replace(">", "")}>
          <Icon name={n.replace(">", "")} size={14} />
          {n.endsWith(">") && <Caret $c="#8f979d" $w={3} />}
        </Mini>
      ) : (
        <Mini key={i} as="span" />
      )
    )}
  </MiniCol>
);

const Ribbon = () => (
  <RibbonBar>
    <Group $w={294}>
      <GroupBody $p={2}>
        <AttrRows>
          <AttrRow>
            <Icon name="levelBlue" size={18} />
            <FieldSelect w={117} value="None" label="Level" />
            <FieldSelect w={147} value="Default" label="Template" />
          </AttrRow>
          <AttrRow>
            <FieldSelect w={60} value="0" icon="swatch" label="Color" />
            <FieldSelect w={60} value="0" icon="lineStyles" label="Line style" />
            <FieldSelect w={52} value="1" icon="weights" label="Line weight" />
            <FieldSelect w={52} value="0" icon="globe" label="Transparency" />
            <FieldSelect w={52} value="0" icon="triSquare" label="Priority" />
          </AttrRow>
        </AttrRows>
      </GroupBody>
      <GroupName>Attributes</GroupName>
    </Group>
    <Group $w={153}>
      <GroupBody>
        <BigButton w={42} icon="explorer" lines={["Explorer"]} />
        <BigButton w={42} icon="page" lines={["Attach", "Tools"]} menu />
        <MiniColumn w={31} items={["cube>", "page>", "levelInfo>"]} />
        <MiniColumn w={31} items={["levels>", "info", "grid4>"]} />
      </GroupBody>
      <GroupName>Primary</GroupName>
    </Group>
    <Group $w={164}>
      <GroupBody>
        <BigButton w={46} icon="cursor" lines={["Element", "Selection"]} />
        <MiniColumn w={19} items={["dashDots", "dashCircle", ""]} />
        <MiniColumn w={19} items={["lockClosed", "lockOpen", "greenFolders"]} />
        <BigButton w={42} icon="fence" lines={["Fence", "Tools"]} menu />
        <MiniColumn w={31} items={["cut", "copy", "paste>"]} />
      </GroupBody>
      <GroupName>Selection</GroupName>
    </Group>
    <Group $w={222}>
      <GroupBody>
        <BigButton w={48} icon="smartline" lines={["Place", "SmartLine"]} />
        <BigButton w={34} icon="line" lines={["Place", "Line"]} />
        <BigButton w={42} icon="arc" lines={["Arc", "Tools"]} menu />
        <MiniColumn w={31} items={["circle>", "box>", "spline>"]} />
        <MiniColumn w={31} items={["point>", "peaks>", "letterA>"]} />
        <MiniColumn w={31} items={["burst>", "", ""]} />
      </GroupBody>
      <GroupName>Placement</GroupName>
    </Group>
    <Group $w={157}>
      <GroupBody>
        <BigButton w={32} icon="moveUp" lines={["Move"]} />
        <BigButton w={33} icon="copyUp" lines={["Copy"]} />
        <BigButton w={35} icon="rotate" lines={["Rotate"]} />
        <MiniColumn w={19} items={["scaleUp", "mirror", "moveParallel"]} />
        <MiniColumn w={31} items={["array", "stretch", "align>"]} />
      </GroupBody>
      <GroupName>Manipulate</GroupName>
    </Group>
    <Group $w={161}>
      <GroupBody>
        <MiniCol $w={92}>
          {[["modify", "Modify Element"], ["breakEl", "Break Element"], ["trim", "Trim Multiple"]].map(([n, s]) => (
            <Mini key={n} type="button">
              <Icon name={n} size={15} />
              {s}
            </Mini>
          ))}
        </MiniCol>
        <MiniColumn w={31} items={["xLines", "branch", "tee>"]} />
        <MiniColumn w={31} items={["dee>", "palette>", "redX"]} />
      </GroupBody>
      <GroupName>Modify</GroupName>
    </Group>
    <Group $w={93}>
      <GroupBody>
        <BigButton w={36} icon="createRegion" lines={["Create", "Region"]} />
        <MiniColumn w={19} items={["regionA", "regionB", "ring"]} />
        <MiniColumn w={31} items={["select3>", "hash>", "hashBulb>"]} />
      </GroupBody>
      <GroupName>
        Groups
        <Svg viewBox="0 0 10 10" $s={8} aria-hidden>
          {l("M1 8V1h7M4 4l4 4M9 5v4h-4", "#999", 1)}
        </Svg>
      </GroupName>
    </Group>
  </RibbonBar>
);

/* ---------- tool bars ---------- */

const Strip = styled.div`
  display: flex;
  align-items: center;
  height: 100%;
  flex: none;
  padding-left: 2px;
  background: linear-gradient(#f6f6f6, #ededed);
`;
const StripRow = styled.div<{ $h: number }>`
  display: flex;
  height: ${(p) => p.$h}px;
  flex: none;
  background: #d4d4d4;
  overflow: hidden;
`;
const Tool = styled.button<{ $on?: boolean }>`
  width: 24px;
  height: 24px;
  flex: none;
  display: grid;
  place-items: center;
  ${(p) => p.$on && css`background: #6fa3cd;`}
`;
const Drop = styled.button`
  width: 13px;
  height: 24px;
  flex: none;
  display: grid;
  place-items: center;
`;
const Grip = styled.span`
  width: 9px;
  height: 22px;
  flex: none;
  background: linear-gradient(#d0d0d0, #d0d0d0) 1px 0 / 1px 100% no-repeat,
    repeating-linear-gradient(#999 0 1px, transparent 1px 3px) 5px 0 / 1px 100% no-repeat;
`;
const Sep = styled.span`
  width: 5px;
  height: 24px;
  flex: none;
  background: linear-gradient(#c4c4c4, #c4c4c4) center / 1px 100% no-repeat;
`;
/* "|" is a separator, "#" a grip; ">" adds a drop-down arrow and "*" presses the button. */
const Tools = ({ items }: { items: string[] }) => (
  <>
    {items.map((n, i) => {
      if (n === "|") return <Sep key={i} />;
      if (n === "#") return <Grip key={i} />;
      const name = n.replace(/[>*]/, "");
      return (
        <React.Fragment key={i}>
          <Tool type="button" aria-label={name} $on={n.endsWith("*")}>
            <Icon name={name} />
          </Tool>
          {n.endsWith(">") && (
            <Drop type="button" aria-label={`${name} menu`}>
              <Caret />
            </Drop>
          )}
        </React.Fragment>
      );
    })}
  </>
);

const row1 = [
  "keyin", "chain", "openDots", "saveDots", "#",
  "tagPen", "tagCol", "tagCopy", "tagHelp", "tagDown", "tagDel", "pageTag", "pieTag", "#",
  "cube>", "page>", "browser>", "cluster>", "picture>", "levelInfo>", "levels>", "star>", "mirrorGreen>",
  "folderFind", "blueList", "info", "plusBox", "ball", "#",
  "resize", "rect", "dashDiag", "cross", "curveIn", "trimPair", "bend", "stepArrow", "tangDash", "#",
  "yellowX", "|", "snapElbow", "snapNear*", "snapMid", "snapCenter", "snapOrigin", "snapBisect", "snapInter", "snapTang", "snapPerp", "|", "snapMulti",
];
const row2 = [
  "dimUp", "dimH", "dimAngle", "dimOrd", "dimCopy", "dimCopy2", "dimH", "dimBox", "dimSlope", "target", "perpBox", "|",
  "keyinMenu", "#",
  "copyUp", "moveUp", "scaleUp", "rotate", "mirror", "array", "|",
  "align", "stretch", "moveParallel", "alignEdge", "roundEdge", "dee", "trim",
];

/* ---------- task pane ---------- */

const Work = styled.section`
  flex: 1;
  min-height: 0;
  display: flex;
`;
const Pane = styled.aside`
  width: 155px;
  flex: none;
  display: flex;
  flex-direction: column;
  border-right: 4px solid #8d979c;
  background: #f0f0f0;
  font: 9px/12px ${TASK};
`;
const PaneTitle = styled.header`
  height: 17px;
  display: flex;
  align-items: center;
  gap: 9px;
  padding-right: 3px;
  background: #c9c9c9;
  font: 10px/12px ${UI};
  span:first-child { margin-right: auto; }
  button { display: grid; }
`;
const TaskCombo = styled.label`
  height: 20px;
  margin: 4px 2px 4px 1px;
  display: flex;
  align-items: center;
  border: 1px solid #a3a3a3;
  border-radius: 3px;
  background: #fff;
  padding: 0 6px 0 3px;
  select {
    appearance: none;
    flex: 1;
    align-self: stretch;
    border: 0;
    border-right: 1px solid #ccc;
    margin-right: 6px;
    padding: 0 2px;
    background: none;
    outline: 0;
  }
`;
const Quick = styled.div`
  display: grid;
  grid-template-columns: repeat(5, 24px);
  height: 52px;
  padding: 1px 0 0 3px;
  background: #fff;
  border-radius: 3px;
  margin-bottom: 2px;
`;
const QuickTool = styled(Tool)`
  position: relative;
  span {
    position: absolute;
    left: 0;
    bottom: 0;
    width: 9px;
    height: 8px;
    background: rgba(225, 225, 225, 0.7);
    border: 1px solid #aaa;
    color: #777;
    font-size: 7px;
    line-height: 7px;
  }
`;
const Scroller = styled.div`
  flex: 1;
  min-height: 0;
  display: flex;
`;
const TaskList = styled.div`
  width: 138px;
  height: 353px;
  padding-right: 3px;
  overflow: hidden;
  display: flex;
  flex-direction: column;
`;
const Section = styled.button<{ $open?: boolean }>`
  height: 20px;
  flex: none;
  margin-bottom: 3px;
  display: flex;
  align-items: center;
  gap: 4px;
  padding: 0 7px 0 2px;
  border: 1px solid ${(p) => (p.$open ? "#cde1f8" : "#bcbcbc")};
  border-radius: 4px;
  background: ${(p) => (p.$open ? "#cde1f8" : "linear-gradient(#f5f5f5,#ebebeb)")};
  font-weight: ${(p) => (p.$open ? 700 : 400)};
  text-align: left;
  > span { flex: 1; }
`;
const Palette = styled.div`
  background: #fff;
  padding: 1px 4px 0 3px;
`;
const Bank = styled.div`
  display: grid;
  grid-template-columns: 10px 1fr;
  column-gap: 1px;
  border-bottom: 1px solid #aaa;
  > b {
    display: grid;
    place-items: center;
    background: linear-gradient(90deg, #f2f2f4, #cfcfd6);
    color: #888;
    font-weight: 400;
  }
  > div {
    display: grid;
    grid-template-columns: repeat(4, 24px);
  }
`;
const Bar = styled.div<{ $w?: number }>`
  width: ${(p) => p.$w ?? 13}px;
  flex: none;
  display: flex;
  flex-direction: column;
  align-items: center;
  justify-content: space-between;
  background: #f0f0f0;
  padding: 3px 0;
`;
const Thumb = styled.span<{ $h: number }>`
  height: ${(p) => p.$h}px;
  align-self: stretch;
  background: #cdcdcd;
  margin: 3px 0 auto;
`;
const ScrollBar = ({ h, w }: { h: number; w?: number }) => (
  <Bar $w={w}>
    <Chevron dir="up" w={1.5} />
    <Thumb $h={h} />
    <Chevron dir="down" w={1.5} />
  </Bar>
);

const banks: [string, string[]][] = [
  ["Q", ["smartline", "line", "peaks", "point", "spline", "sketch", "wave", "rays", "construct", "perpLine"]],
  ["W", ["box", "shape", "orthoShape", "polygon"]],
  ["E", ["circle", "ellipse", "arc", "halfEllipse", "quarter", "arcUp", "arcExt", "arcMod"]],
  ["R", ["hatchBox", "hatchCircle", "hatchBlock", "gears", "hatchHelp", "hatchCopy", "hatchEdit", "hatchDel"]],
  ["A", ["textA", "textArc", "textNote", "textCopyB", "spell", "textCase", "textHelp", "textMatch", "textItalic", "textPoint", "a1a", "a1a1"]],
];

const TaskPane = () => (
  <Pane>
    <PaneTitle>
      <span>Tasks</span>
      <Caret />
      <Svg viewBox="0 0 10 10" $s={9} aria-hidden>{l("M3 1h4v5h-4zM1 6h8M5 6v3", "#222", 1)}</Svg>
      <button type="button" aria-label="Close tasks"><Cross w={1.6} /></button>
    </PaneTitle>
    <TaskCombo>
      <Icon name="tasks" size={14} />
      <select aria-label="Task set" defaultValue="Tasks"><option>Tasks</option></select>
      <Caret />
    </TaskCombo>
    <Quick>
      {["cursor*", "fence", "elMove", "brush", "palette", "accuBulb", "modBox", "redX", "measure"].map((n, i) => (
        <QuickTool key={n} type="button" aria-label={n} $on={n.endsWith("*")}>
          <Icon name={n.replace("*", "")} />
          <span>{i + 1}</span>
        </QuickTool>
      ))}
    </Quick>
    <Scroller>
      <TaskList>
        {[["plane", "Drafting Tools"], ["steel", "Steelwork Tools"], ["wrench", "PTV Print"]].map(([n, s]) => (
          <Section key={n} type="button">
            <Icon name={n} size={14} />
            <span>{s}</span>
            <Chevron dir="down" />
          </Section>
        ))}
        <Section type="button" $open>
          <Icon name="smartline" size={14} />
          <span>Drawing</span>
          <Icon name="gridView" size={12} />
          <Icon name="listView" size={12} />
          <Icon name="panelView" size={12} />
          <Chevron dir="up" />
        </Section>
        <Palette>
          {banks.map(([k, list]) => (
            <Bank key={k}>
              <b>{k}</b>
              <div>
                {list.map((n) => (
                  <Tool key={n} type="button" aria-label={n}>
                    <Icon name={n} size={20} />
                  </Tool>
                ))}
              </div>
            </Bank>
          ))}
        </Palette>
      </TaskList>
      <ScrollBar h={175} />
    </Scroller>
  </Pane>
);

/* ---------- view window ---------- */

const View = styled.div`
  flex: 1;
  min-width: 0;
  display: flex;
  flex-direction: column;
`;
const ViewTitle = styled.header`
  height: 26px;
  display: flex;
  align-items: center;
  gap: 6px;
  padding: 4px 1px 0 1px;
  border-top: 2px solid #7f8b99;
  background: linear-gradient(#8fb0d6, #c0d3e8);
`;
const WinButtons = styled.div`
  display: flex;
  gap: 2px;
  margin-left: auto;
`;
const WinButton = styled.button<{ $close?: boolean }>`
  width: 28px;
  height: 15px;
  display: grid;
  place-items: center;
  border: 1px solid ${(p) => (p.$close ? "#7a2a20" : "#7d93ad")};
  border-radius: 2px;
  background: ${(p) => (p.$close ? "linear-gradient(#dd7a66,#b8321e)" : "linear-gradient(#dbe7f4,#a9c0da)")};
`;
const ViewTools = styled.div`
  height: 20px;
  display: flex;
  align-items: center;
  background: #f4f4f4;
  ${Tool} { width: 19px; height: 20px; }
  ${Sep} { height: 18px; width: 4px; }
`;
const Canvas = styled.div`
  position: relative;
  flex: 1;
  background: #000;
`;
const viewTools = [
  "viewAttr>", "shapesColor", "lamp>", "|", "brush", "zoomIn", "zoomOut", "zoomWin", "fit", "orbit", "hand", "|",
  "viewPrev", "viewNext", "|", "viewCopy", "clip", "clipMask",
];

/* ---------- element selection ---------- */

const SelWindow = styled.section`
  position: absolute;
  left: 12px;
  top: 23px;
  width: 230px;
  height: 379px;
  background: #f0f0f0;
  display: flex;
  flex-direction: column;
`;
const SelTitle = styled.header`
  height: 25px;
  display: flex;
  align-items: center;
  gap: 4px;
  padding: 0 15px 0 6px;
  background: #fff;
  color: #999;
  h2 { margin: 0 auto 0 0; font: 10px/14px ${UI}; }
  div { display: flex; gap: 31px; }
`;
const SelRow = styled.div<{ $top: number }>`
  display: flex;
  align-items: center;
  margin: ${(p) => p.$top}px 11px 0 10px;
  > button { margin-left: 20px; }
  > button:last-child:not(:nth-child(2)) { margin-left: auto; align-self: end; }
`;
const Methods = styled.div`
  width: 101px;
  height: 23px;
  display: flex;
  align-items: center;
  justify-content: space-between;
  padding: 0 1px;
  border: 1px solid #a9a9a9;
  border-right-color: #fff;
  border-bottom-color: #fff;
`;
const Method = styled(Tool)`
  width: 19px;
  height: 19px;
  ${(p) => p.$on && css`background: #7db2dc; outline: 1px solid #5a86ab;`}
`;
const TabSpacer = styled.div`
  height: 12px;
`;
const TabRow = styled.div<{ $shift?: boolean }>`
  display: grid;
  grid-template-columns: repeat(4, 1fr);
  height: 20px;
  margin: 0 ${(p) => (p.$shift ? "5px 0 14px" : "9px 0 10px")};
`;
const SelTab = styled.button<{ $on?: boolean }>`
  display: grid;
  place-items: center;
  border-top: 1px solid #ddd;
  border-right: 1px solid #ddd;
  background: ${(p) => (p.$on ? "#fff" : "none")};
`;
const BackPage = styled.div`
  margin: 0 5px 0 11px;
  padding-right: 3px;
  border-right: 1px solid #ddd;
`;
const TabPage = styled.div`
  height: 224px;
  padding: 7px 7px 7px 8px;
  border: 1px solid #c9c9c9;
  border-top: 0;
`;
const LevelBox = styled.div`
  height: 210px;
  display: flex;
  border: 1px solid #8f8f8f;
  background: #fff;
`;
const LevelTable = styled.table`
  flex: 1;
  height: 207px;
  border-collapse: collapse;
  th, td { padding: 0 0 0 4px; text-align: left; font-weight: 400; line-height: 12px; white-space: nowrap; }
  th { height: 20px; vertical-align: middle; }
  th:first-child { width: 126px; border-right: 1px solid #e3e3e3; }
  th:last-child { padding: 0 0 8px 12px; }
`;

const levelNames = [
  "01 Annotations", "12d_ppf_text_large", "12d_ppf_text_small", "12d_std_blue", "12d_std_dark_grey", "12d_std_magenta",
  "12d_std_off_yellow", "12d_std_red", "12d_std_yellow", "12d_unknown", "_PAVEMENT-MAINTENA...", "ALGN AA01 OP02 U TRO...",
];

const ElementSelection = () => (
  <SelWindow aria-label="Element Selection">
    <SelTitle>
      <Icon name="settings" size={14} />
      <h2>Element Selection</h2>
      <div>
        <Svg viewBox="0 0 10 10" $s={9} aria-hidden>{l("M0 5h10", "#888", 1)}</Svg>
        <Svg viewBox="0 0 10 10" $s={9} aria-hidden>{l("M1 1h8v8h-8z", "#ddd", 1)}</Svg>
        <Cross c="#777" />
      </div>
    </SelTitle>
    <SelRow $top={10}>
      <Methods>
        {["selIndividual*", "dashBox", "dashShape", "dashRound", "dashLine"].map((n) => (
          <Method key={n} type="button" aria-label={n} $on={n.endsWith("*")}><Icon name={n.replace("*", "")} size={16} /></Method>
        ))}
      </Methods>
      <button type="button" aria-label="Disable handles"><Icon name="disableHandles" size={20} /></button>
    </SelRow>
    <SelRow $top={13}>
      <Methods>
        {["selNew*", "plus", "minus", "invert", "dashDots"].map((n) => (
          <Method key={n} type="button" aria-label={n} $on={n.endsWith("*")}><Icon name={n.replace("*", "")} size={17} /></Method>
        ))}
      </Methods>
      <button type="button" aria-label="Select all"><Icon name="selectAll" size={20} /></button>
      <button type="button" aria-label="Hide info">
        <Svg viewBox="0 0 8 8" $s={8} aria-hidden>{f("M4 0l4 5h-8z", "#000")}</Svg>
      </button>
    </SelRow>
    <TabSpacer />
    <TabRow $shift>
      {["curves", "ports", "levelBlue", "ballBlue"].map((n) => (
        <SelTab key={n} type="button" aria-label={n}><Icon name={n} size={15} /></SelTab>
      ))}
    </TabRow>
    <TabRow>
      {["levelsGrey", "colors", "lineStyles", "weights"].map((n, i) => (
        <SelTab key={n} type="button" aria-label={n} $on={i === 0}><Icon name={n} size={16} /></SelTab>
      ))}
    </TabRow>
    <BackPage>
      <TabPage>
        <LevelBox>
          <LevelTable>
            <thead>
              <tr><th>Level</th><th><Chevron dir="down" c="#777" w={1} /></th></tr>
            </thead>
            <tbody>
              {levelNames.map((n) => <tr key={n}><td colSpan={2}>{n}</td></tr>)}
            </tbody>
          </LevelTable>
          <ScrollBar h={13} />
        </LevelBox>
      </TabPage>
    </BackPage>
  </SelWindow>
);

/* ---------- tool boxes dialog ---------- */

const Dialog = styled.section`
  position: absolute;
  left: 567px;
  top: 114px;
  width: 469px;
  height: 426px;
  display: flex;
  flex-direction: column;
  background: #f0f0f0;
  box-shadow: 0 0 1px 1px #8c8c8c, 0 2px 10px rgba(0, 0, 0, 0.4);
`;
const DialogTitle = styled.header`
  height: 24px;
  display: flex;
  align-items: center;
  gap: 4px;
  padding: 0 10px 0 7px;
  background: #fff;
  h2 { margin: 0 auto 0 0; font: 10px/14px ${UI}; }
  button { display: grid; }
`;
const DialogBody = styled.div`
  display: grid;
  grid-template-columns: 323px 108px;
  column-gap: 17px;
  padding: 10px 11px 0 10px;
`;
const ListBox = styled.div`
  height: 339px;
  display: flex;
  border: 1px solid #828790;
  background: #fff;
  overflow: hidden;
`;
const BoxList = styled.ul`
  flex: 1;
  height: 340px;
  padding: 1px 2px 0 1px;
  display: flex;
  flex-direction: column;
`;
const BoxItem = styled.li<{ $tone?: "hover" | "picked" }>`
  flex: 1;
  display: flex;
  border: 1px solid transparent;
  ${(p) => p.$tone === "hover" && css`background: #edf6fb; border-color: #e0eff7;`}
  ${(p) => p.$tone === "picked" && css`background: linear-gradient(#eef8fd, #cfebf8); border-color: #a9d5e6;`}
  label { flex: 1; display: flex; align-items: center; gap: 3px; line-height: 12px; }
  input {
    appearance: none;
    width: 10px;
    height: 10px;
    border: 1px solid #444;
    background: #fff;
    box-shadow: inset 1px 1px 1px #aaa;
  }
`;
const Side = styled.div`
  display: flex;
  flex-direction: column;
`;
const SideSelect = styled.label`
  height: 17px;
  display: flex;
  align-items: center;
  margin-bottom: 14px;
  padding-right: 4px;
  border: 1px solid #adadad;
  background: #e3e3e3;
  select { flex: 1; appearance: none; border: 0; padding: 0 3px; background: none; outline: 0; }
`;
const Check = styled.label`
  height: 20px;
  display: flex;
  align-items: center;
  gap: 4px;
  input {
    appearance: none;
    position: relative;
    width: 16px;
    height: 16px;
    border: 1px solid #444;
    background: #fff;
  }
  input:checked::after {
    content: "";
    position: absolute;
    left: 4px;
    top: 1px;
    width: 4px;
    height: 8px;
    border: solid #333;
    border-width: 0 2px 2px 0;
    transform: rotate(48deg);
  }
`;
const CustomizeGap = styled.div`
  height: 17px;
`;
const Push = styled.button<{ $primary?: boolean }>`
  height: 22px;
  background: #e1e1e1;
  border: ${(p) => (p.$primary ? "2px solid #1a6aa8" : "1px solid #adadad")};
`;
const Footer = styled.footer`
  display: grid;
  grid-template-columns: 79px 79px;
  justify-content: end;
  gap: 11px;
  padding: 21px 11px 0;
`;

const boxes = [
  "2D Constraint Tools", "2D View Control", "3D Constraint Tools", "3D View Control", "3d Input", "A1-Custom", "A3-Custom", "ACS",
  "AccuDraw", "Angular Dimensions", "Animation", "Animation Actors", "Animation Cameras", "Animation Settings", "Annotate", "Arcs",
  "Attach Element", "Attributes", "Base Geometry", "Boolean Meshes", "CE_Modify Features-Custom", "CE_Solids Utilities-Custom",
];

const ToolBoxes = () => (
  <Dialog role="dialog" aria-label="Tool Boxes">
    <DialogTitle>
      <Svg viewBox="0 0 14 14" $s={13} aria-hidden>
        {f("M0 0h14v14h-14z", "#0f4c8f")}
        {l("M3 12L6 3L5 8q1 2 4-1L10 3L9 8l2 0", "#fff", 1.4)}
      </Svg>
      <h2>Tool Boxes</h2>
      <button type="button" aria-label="Close"><Cross /></button>
    </DialogTitle>
    <DialogBody>
      <ListBox>
        <BoxList>
          {boxes.map((b, i) => (
            <BoxItem key={b} $tone={i === 8 ? "hover" : i === 20 ? "picked" : undefined}>
              <label><input type="checkbox" />{b}</label>
            </BoxItem>
          ))}
        </BoxList>
        <ScrollBar h={39} w={14} />
      </ListBox>
      <Side>
        <SideSelect>
          <select aria-label="Category" defaultValue="Tool Boxes"><option>Tool Boxes</option></select>
          <Caret />
        </SideSelect>
        <Check><input type="checkbox" /><span><u>L</u>arge Buttons</span></Check>
        <Check><input type="checkbox" defaultChecked /><span><u>S</u>how Tool Tips</span></Check>
        <Check><input type="checkbox" defaultChecked /><span><u>I</u>mmediately Open</span></Check>
        <CustomizeGap />
        <Push type="button"><u>C</u>ustomize</Push>
      </Side>
    </DialogBody>
    <Footer>
      <Push type="button" $primary><u>O</u>K</Push>
      <Push type="button">Cancel</Push>
    </Footer>
  </Dialog>
);

const Pointer = styled.div`
  position: absolute;
  left: 689px;
  top: 276px;
  width: 27px;
  height: 27px;
  border-radius: 50%;
  background: rgba(246, 240, 60, 0.82);
  pointer-events: none;
  svg { position: absolute; left: 13px; top: 12px; overflow: visible; }
`;

/* ---------- status bar ---------- */

const StatusBar = styled.footer`
  height: 31px;
  flex: none;
  display: flex;
  align-items: center;
  padding: 0 0 3px 3px;
  border-bottom: 1px solid #d0d0d0;
  background: #f2f2f2;
  overflow: hidden;
`;
const ViewCombo = styled.label`
  width: 133px;
  height: 19px;
  flex: none;
  display: flex;
  align-items: center;
  padding: 0 5px 0 1px;
  border: 1px solid #b3b3b3;
  background: #e4e4e4;
  select { flex: 1; min-width: 0; appearance: none; border: 0; padding: 0 2px; background: none; outline: 0; }
`;
const Numbers = styled.div`
  display: flex;
`;
const NumberKey = styled.button<{ $on?: boolean }>`
  width: 14px;
  height: 19px;
  border-right: 1px solid #555;
  background: ${(p) => (p.$on ? "#6fa8dc" : "none")};
  &:last-child { border-right-color: #ccc; }
`;
const Coord = styled.label`
  display: flex;
  align-items: center;
  gap: 5px;
  margin: 0 1px 0 5px;
  font-size: 12px;
  font-weight: 600;
  input {
    width: 140px;
    height: 17px;
    padding: 0 4px;
    border: 1px solid #ccc;
    background: #fff;
    font-size: 10px;
    font-weight: 400;
    color: #888;
  }
`;

const KeyTip = styled.span`
  position: absolute;
  left: 304px;
  top: 116px;
  width: 8px;
  height: 11px;
  background: rgba(240, 240, 240, 0.8);
  border: solid #999;
  border-width: 0 1px 1px 0;
  color: #666;
  line-height: 10px;
`;

const tabs = ["Home", "View", "Annotate", "Attach", "Analyze", "Curves", "Constraints", "Utilities", "Drawing Aids", "Content", "Help", "PTV Print"];

export default function App() {
  return (
    <Screen>
      <Global />
      <Shell>
        <TabBar>
          <FileTab type="button">File</FileTab>
          {tabs.map((s, i) => <Tab key={s} type="button" $on={i === 0}>{s}</Tab>)}
          <SearchBox>
            <input type="search" aria-label="Search Ribbon" placeholder="Search Ribbon (F4)" />
            <Svg viewBox="0 0 12 12" $s={11} aria-hidden>
              {o(7.5, 4.5, 3.3, "#2a6fd0", "#fff", 1.5)}
              {l("M5 7L1 11", "#2a6fd0", 2)}
            </Svg>
          </SearchBox>
          <Collapse type="button" aria-label="Collapse ribbon"><Chevron dir="up" c={GREY} w={1.8} /></Collapse>
        </TabBar>
        <Ribbon />
        <StripRow $h={29}><Strip><Tools items={row1} /></Strip></StripRow>
        <StripRow $h={28}><Strip><Tools items={row2} /></Strip></StripRow>
        <Work>
          <TaskPane />
          <View>
            <ViewTitle>
              <Icon name="link" size={13} />
              <span>View 1, Cloud tool</span>
              <WinButtons>
                <WinButton type="button" aria-label="Minimize"><Svg viewBox="0 0 12 12" $s={11} aria-hidden>{f("M1 6h10v3h-10z", "#fff", "#555", 0.8)}</Svg></WinButton>
                <WinButton type="button" aria-label="Restore"><Svg viewBox="0 0 12 12" $s={13} aria-hidden>{f("M5 1h6v6h-6z", "#fff", "#555")}{f("M1 4h7v7h-7z", "#fff", "#555")}{f("M4 6h2v2h-2z", "#555")}</Svg></WinButton>
                <WinButton type="button" aria-label="Close view" $close><Cross c="#fff" s={11} w={2.4} /></WinButton>
              </WinButtons>
            </ViewTitle>
            <ViewTools>
              {viewTools.map((n, i) => {
                if (n === "|") return <Sep key={i} />;
                const name = n.replace(">", "");
                return (
                  <React.Fragment key={i}>
                    <Tool type="button" aria-label={name}><Icon name={name} size={16} /></Tool>
                    {n.endsWith(">") && <Drop type="button" aria-label={`${name} menu`}><Caret /></Drop>}
                  </React.Fragment>
                );
              })}
            </ViewTools>
            <Canvas><ElementSelection /></Canvas>
          </View>
        </Work>
        <StatusBar>
          <Tools items={["back>", "forward>", "compass>"]} />
          <ViewCombo>
            <Icon name="windowPair" size={17} />
            <select aria-label="View group" defaultValue="Cloud tool Views"><option>Cloud tool Views</option></select>
            <Caret />
          </ViewCombo>
          <Tools items={["|", "windowPair", "|"]} />
          <Numbers>
            {[1, 2, 3, 4, 5, 6, 7, 8].map((n) => <NumberKey key={n} type="button" $on={n === 1}>{n}</NumberKey>)}
          </Numbers>
          <Tools
            items={[
              "#", "textA", "textArc", "textNote", "textCopyB", "spell", "textCase", "|", "textHelp", "textMatch", "textItalic", "textPoint", "|",
              "table", "|", "a1a", "a1a1", "a1a2", "abcField", "fields", "fx", "|", "boldB", "|", "tagPen", "#",
            ]}
          />
          <Coord>X<input type="text" defaultValue="2.0459" /></Coord>
          <Grip />
          <Coord>Y<input type="text" defaultValue="0.2974" /></Coord>
        </StatusBar>
        <KeyTip>S</KeyTip>
        <ToolBoxes />
        <Pointer>
          <Svg viewBox="0 0 12 18" $s={18} aria-hidden preserveAspectRatio="xMinYMin">
            {f("M1 1v13l3-3 2 5 2-1-2-5h4z", "#fff", "#333", 1)}
          </Svg>
        </Pointer>
      </Shell>
    </Screen>
  );
}
